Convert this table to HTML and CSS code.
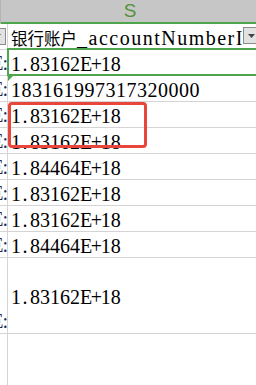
FILE: index.html
```html
<!DOCTYPE html>
<html>
<head>
<meta charset="utf-8">
<link rel="stylesheet" href="styles.css">
</head>
<body>
<div class="sheet">
  <div class="colhead">
    <div class="ch ch-r"></div>
    <div class="ch ch-s">S</div>
  </div>
  <div class="row">
    <div class="c r"><span class="fbtn"><svg width="7" height="4" viewBox="0 0 7 4"><polygon points="0,0 7,0 3.5,4" fill="#444"/></svg></span></div>
    <div class="c s"><span class="htext"><span class="cjk">银行账户</span>_accountNumberId</span><span class="fbtn"><svg width="7" height="4" viewBox="0 0 7 4"><polygon points="0,0 7,0 3.5,4" fill="#444"/></svg></span></div>
  </div>
  <div class="row"><div class="c r"><span class="rt">E:</span></div><div class="c s">1<span class="dp">.</span>83162<span class="ex">E+</span>18</div></div>
  <div class="row"><div class="c r"><span class="rt">E:</span></div><div class="c s"><span class="err"></span><span class="long">183161997317320000</span></div></div>
  <div class="row"><div class="c r"><span class="rt">E:</span></div><div class="c s">1<span class="dp">.</span>83162<span class="ex">E+</span>18</div></div>
  <div class="row"><div class="c r"><span class="rt">E:</span></div><div class="c s">1<span class="dp">.</span>83162<span class="ex">E+</span>18</div></div>
  <div class="row"><div class="c r"><span class="rt">E:</span></div><div class="c s">1<span class="dp">.</span>84464<span class="ex">E+</span>18</div></div>
  <div class="row"><div class="c r"><span class="rt">E:</span></div><div class="c s">1<span class="dp">.</span>83162<span class="ex">E+</span>18</div></div>
  <div class="row"><div class="c r"><span class="rt">E:</span></div><div class="c s">1<span class="dp">.</span>83162<span class="ex">E+</span>18</div></div>
  <div class="row"><div class="c r"><span class="rt">E:</span></div><div class="c s">1<span class="dp">.</span>84464<span class="ex">E+</span>18</div></div>
  <div class="row tall"><div class="c r"><span class="rt">E:</span></div><div class="c s">1<span class="dp">.</span>83162<span class="ex">E+</span>18</div></div>
  <div class="row last"><div class="c r"></div><div class="c s"></div></div>
  <div class="sel"></div>
  <div class="redbox"></div>
</div>
</body>
</html>
```
FILE: styles.css
```css
html, body {
  margin: 0;
  padding: 0;
  background: #fff;
}
.sheet {
  position: relative;
  width: 256px;
  height: 385px;
  overflow: hidden;
  font-family: "Liberation Serif", "Noto Sans CJK SC", serif;
  font-size: 20px;
  color: #000;
  display: flex;
  flex-direction: column;
}
.colhead {
  display: flex;
  height: 24px;
  flex: none;
}
.ch {
  box-sizing: border-box;
  height: 24px;
}
.ch-r {
  width: 8px;
  background: #dcdcdc;
  border-right: 1px solid #b4b4b4;
  border-bottom: 2px solid #bcbcbc;
}
.ch-s {
  width: 258px;
  flex: none;
  background: #c6c6c6;
  border-bottom: 2px solid #4ea54e;
  color: #54923a;
  font-family: "Liberation Sans", sans-serif;
  font-size: 19px;
  text-align: center;
  line-height: 22px;
}
.row {
  display: flex;
  flex: none;
  height: 26px;
  box-sizing: border-box;
  border-bottom: 1px solid #d4d4d4;
}
.row.tall {
  height: 76px;
}
.row.last {
  flex: 1;
  border-bottom: none;
}
.c {
  box-sizing: border-box;
  overflow: hidden;
  white-space: nowrap;
  display: flex;
}
.c.r {
  width: 8px;
  flex: none;
  border-right: 1px solid #d4d4d4;
  justify-content: flex-end;
  align-items: flex-end;
  padding-bottom: 1px;
}
.rt {
  flex: none;
  color: #1c2a55;
  line-height: 22px;
  letter-spacing: -1px;
}
.c.s {
  position: relative;
  width: 258px;
  flex: none;
  padding-left: 3px;
  padding-top: 3px;
  align-items: center;
}
.dp {
  padding-left: 1.5px;
  letter-spacing: 2.5px;
}
.ex {
  letter-spacing: -1.4px;
}
.long {
  letter-spacing: 0.5px;
}
.htext {
  flex: 1;
  min-width: 0;
  overflow: hidden;
  letter-spacing: 1.5px;
}
.cjk {
  font-family: "Noto Sans CJK SC", sans-serif;
  font-size: 16.5px;
  letter-spacing: 0;
}
.fbtn {
  flex: none;
  box-sizing: border-box;
  width: 17px;
  height: 17px;
  margin-right: 6px;
  border: 1px solid #8c8c8c;
  background: #e2e2e2;
  display: flex;
  align-items: center;
  justify-content: center;
  align-self: flex-start;
}
.c.r .fbtn {
  margin-right: 1px;
  align-self: center;
}
.err {
  position: absolute;
  left: 0;
  top: 0;
  width: 0;
  height: 0;
  border-top: 5px solid #4ea54e;
  border-right: 5px solid transparent;
}
.sel {
  position: absolute;
  left: 7px;
  top: 48px;
  width: 270px;
  height: 28px;
  box-sizing: border-box;
  border: 2px solid #4ea54e;
}
.redbox {
  position: absolute;
  left: 8px;
  top: 102px;
  width: 139px;
  height: 46px;
  box-sizing: border-box;
  border: 3px solid #e8453c;
  border-radius: 4px;
}
```
